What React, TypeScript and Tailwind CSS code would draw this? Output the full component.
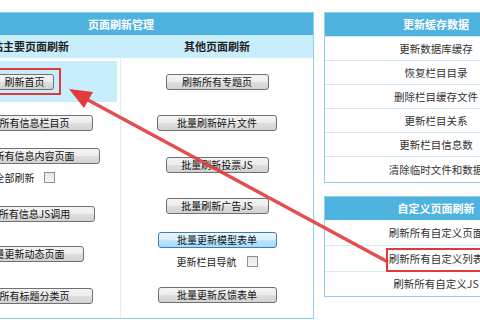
import React from 'react'

const btn =
  "inline-flex items-center justify-center h-[16px] border border-[#707070] rounded-[3px] bg-[linear-gradient(#f4f4f4_0%,#ececec_50%,#dedede_51%,#d2d2d2_100%)] text-[10px] leading-none text-[#111] shrink-0"
const btnFocus =
  "inline-flex items-center justify-center h-[16px] border border-[#3c7fb1] rounded-[3px] bg-[linear-gradient(#eaf6fd_0%,#d9f0fc_50%,#bee6fd_51%,#a7d9f5_100%)] text-[10px] leading-none text-[#111] shrink-0"

function Check() {
  return (
    <span className="inline-block w-[11px] h-[11px] border border-[#8e8f8f] bg-[linear-gradient(#e6e6e6,#f7f7f7)] shrink-0" />
  )
}

const cacheRows = ['更新数据库缓存', '恢复栏目目录', '删除栏目缓存文件', '更新栏目关系', '更新栏目信息数', '清除临时文件和数据']

export default function App() {
  return (
    <div
      className="relative w-[480px] h-[320px] overflow-hidden bg-white flex items-start pt-[12px] text-[#222]"
      style={{ fontFamily: '"Noto Sans CJK SC", "Noto Sans", sans-serif' }}
    >
      {/* 页面刷新管理 */}
      <div className="ml-[-72px] w-[386px] shrink-0 border border-[#8fd0ec] flex flex-col">
        <div className="h-[22px] bg-[#4fb3e0] flex items-center justify-center text-white font-bold text-[11px]">
          页面刷新管理
        </div>
        <div className="h-[23px] bg-[#c8eefc] flex text-[11px] font-bold text-[#222]">
          <div className="w-[192px] flex items-center justify-center">网站主要页面刷新</div>
          <div className="flex-1 flex items-center justify-center">其他页面刷新</div>
        </div>
        <div className="h-[260px] flex">
          <div className="w-[192px] border-r border-[#e3eef3] flex flex-col items-center">
            <div className="mt-[3px] w-[184px] h-[41px] bg-[#c8eefc] flex items-center justify-center">
              <span className={`${btn} w-[59px]`}>刷新首页</span>
            </div>
            <span className={`${btn} w-[136px] mt-[13px]`}>刷新所有信息栏目页</span>
            <span className={`${btn} w-[150px] mt-[17px]`}>刷新所有信息内容页面</span>
            <div className="mt-[6px] h-[14px] flex items-center gap-[9px] text-[10px]">
              全部刷新 <Check />
            </div>
            <span className={`${btn} w-[140px] mt-[22px]`}>刷新所有信息JS调用</span>
            <span className={`${btn} w-[118px] mt-[24px]`}>批量更新动态页面</span>
            <span className={`${btn} w-[136px] mt-[26px]`}>刷新所有标题分类页</span>
          </div>
          <div className="flex-1 flex flex-col items-center">
            <span className={`${btn} w-[103px] mt-[16px]`}>刷新所有专题页</span>
            <span className={`${btn} w-[120px] mt-[25px]`}>批量刷新碎片文件</span>
            <span className={`${btn} w-[103px] mt-[26px]`}>批量刷新投票JS</span>
            <span className={`${btn} w-[103px] mt-[25px]`}>批量刷新广告JS</span>
            <span className={`${btnFocus} w-[119px] mt-[18px]`}>批量更新模型表单</span>
            <div className="mt-[6px] h-[14px] flex items-center gap-[10px] text-[10px]">
              更新栏目导航 <Check />
            </div>
            <span className={`${btn} w-[119px] mt-[19px]`}>批量更新反馈表单</span>
          </div>
        </div>
      </div>

      {/* right side */}
      <div className="ml-[10px] w-[224px] shrink-0 flex flex-col">
        <div className="border border-[#8fd0ec] flex flex-col">
          <div className="h-[23px] bg-[#4fb3e0] flex items-center justify-center text-white font-bold text-[11px]">
            更新缓存数据
          </div>
          {cacheRows.map((r, i) => (
            <div
              key={r}
              className={`${i === 5 ? 'h-[26px]' : 'h-[24px]'} border-t border-[#d4ecf7] flex items-center justify-center text-[10.5px] text-[#333]`}
            >
              {r}
            </div>
          ))}
        </div>

        <div className="mt-[13px] border border-[#8fd0ec] flex flex-col">
          <div className="h-[23px] bg-[#4fb3e0] flex items-center justify-center text-white font-bold text-[11px]">
            自定义页面刷新
          </div>
          <div className="h-[25px] flex items-center justify-center text-[10.5px] text-[#333]">刷新所有自定义页面</div>
          <div className="h-[26px] border-t border-[#d4ecf7] flex items-center justify-center text-[10.5px] text-[#333]">
            刷新所有自定义列表
          </div>
          <div className="h-[25px] border-t border-[#d4ecf7] flex items-center justify-center text-[10.5px] text-[#333]">
            刷新所有自定义JS
          </div>
        </div>
      </div>

      {/* annotation marks */}
      <div className="absolute left-[-4px] top-[68px] w-[65px] h-[27px] border-2 border-[#e0393b]" />
      <div className="absolute left-[386px] top-[248px] w-[110px] h-[24px] border-2 border-[#e0393b]" />
      <svg className="absolute inset-0 pointer-events-none" width="480" height="320" viewBox="0 0 480 320">
        <line x1="388" y1="262" x2="88" y2="100" stroke="#e23b3b" strokeWidth="3.5" strokeOpacity="0.9" />
        <polygon points="69,89 93,92 84,108" fill="#e23b3b" />
      </svg>
    </div>
  )
}
